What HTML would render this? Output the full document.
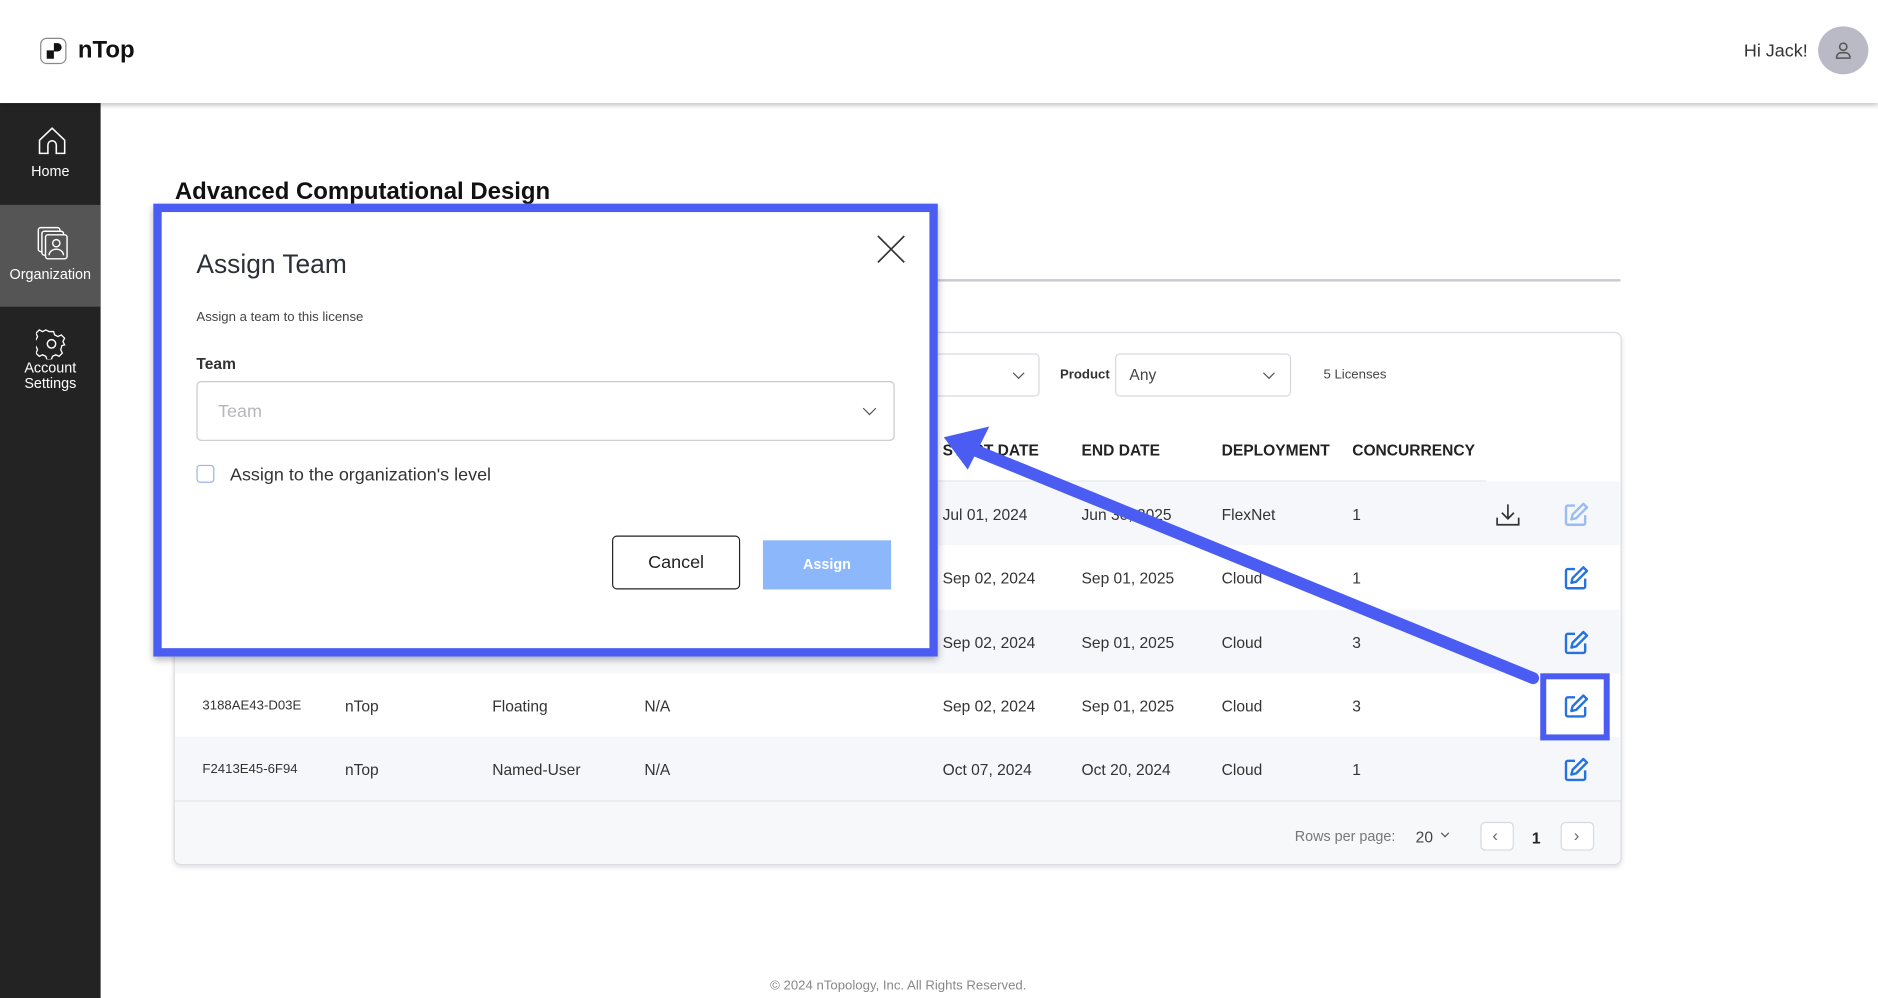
<!DOCTYPE html>
<html><head><meta charset="utf-8">
<style>
html,body{margin:0;padding:0;width:1878px;height:998px;overflow:hidden;background:#fff;font-family:"Liberation Sans",sans-serif;color:#222}
#w{position:absolute;left:0;top:0;width:1568px;height:833px;transform:scale(1.19770,1.19808);transform-origin:0 0}
.a{position:absolute}
.hdr{left:0;top:0;width:1568px;height:86px;background:#fff;box-shadow:0 2px 4px rgba(0,0,0,.25);z-index:2}
.side{left:0;top:86px;width:84px;height:747px;background:#232323}
.nav{position:absolute;left:0;width:84px;height:85px;color:#fff;font-size:12px;text-align:center;line-height:13px}
.row{position:absolute;left:146px;width:1206px;height:53px}
.row span{position:absolute;top:20px;font-size:13px;color:#333}
.card{left:145px;top:277px;width:1207px;height:443px;border:1px solid #dcdde2;border-radius:6px;box-shadow:0 2px 4px rgba(0,0,0,.12);background:#fff;overflow:hidden}
.sel{position:absolute;border:1px solid #d8d9de;border-radius:4px;background:#fff}
.chev{position:absolute;width:6px;height:6px;border-right:1px solid #555;border-bottom:1px solid #555;transform:rotate(45deg)}
</style></head><body>
<div id="w">
<div class="a hdr">
  <svg class="a" style="left:33px;top:31px" width="24" height="24" viewBox="0 0 24 24"><rect x="1" y="1" width="21" height="21" rx="5" fill="#fff" stroke="#888" stroke-width="1"/><path d="M12 5h3a3 3 0 0 1 0 7h-3v6H6v-7h6z" fill="#111"/></svg>
  <div class="a" style="left:65px;top:31px;font-size:20px;font-weight:bold;color:#111">nTop</div>
  <div class="a" style="left:1456px;top:34px;font-size:15px;color:#333">Hi Jack!</div>
  <div class="a" style="left:1518px;top:22px;width:42px;height:40px;border-radius:50%;background:#babac6"></div>
  <svg class="a" style="left:1530px;top:33px" width="18" height="18" viewBox="0 0 18 18" fill="none" stroke="#555" stroke-width="1.3"><circle cx="9" cy="6" r="3"/><path d="M3.5 15.5v-1.5a4 4 0 0 1 4-3h3a4 4 0 0 1 4 3v1.5z"/></svg>
</div>
<div class="a side">
  <div class="nav" style="top:0">
    <svg style="position:absolute;left:31px;top:19px" width="25" height="25" viewBox="0 0 25 25" fill="none" stroke="#fff" stroke-width="1.3"><path d="M2 12L12.5 2 23 12v11h-7v-7a3.5 3.5 0 0 0-7 0v7H2z"/></svg>
    <div style="position:absolute;top:51px;width:84px">Home</div>
  </div>
  <div class="nav" style="top:85px;background:#555">
    <svg style="position:absolute;left:31px;top:18px" width="26" height="28" viewBox="0 0 26 28" fill="none" stroke="#fff" stroke-width="1.2"><rect x="1" y="1" width="18" height="20" rx="2"/><rect x="4" y="4" width="18" height="20" rx="2" fill="#555"/><rect x="7" y="7" width="18" height="20" rx="2" fill="#555"/><circle cx="16" cy="14" r="3"/><path d="M10 24a6 5 0 0 1 12 0"/></svg>
    <div style="position:absolute;top:52px;width:84px">Organization</div>
  </div>
  <div class="nav" style="top:170px">
    <svg style="position:absolute;left:30px;top:18px" width="26" height="26" viewBox="0 0 26 26" fill="none" stroke="#fff" stroke-width="1.2"><path d="M11 2h4l1 3 3 1.5 3-1.5 3 3-1.5 3 1.5 3-3 1 .5 0-1 3.5 1.5 3-3 3-3-1.5-3 1.5-1 3h-4l-1-3-3-1.5-3 1.5-3-3 1.5-3-1.5-3-3-1v-4l3-1 1.5-3-1.5-3 3-3 3 1.5 3-1.5z" transform="scale(.92) translate(1,1)"/><circle cx="13" cy="13" r="3.5"/></svg>
    <div style="position:absolute;top:45px;width:84px">Account<br>Settings</div>
  </div>
</div>

<div class="a" style="left:146px;top:149px;font-size:20px;font-weight:bold;color:#111">Advanced Computational Design</div>
<div class="a" style="left:146px;top:233px;width:1207px;height:2px;background:#c8c9d0"></div>

<div class="a card">
  <div class="sel" style="left:590px;top:17px;width:130px;height:34px"><div class="chev" style="left:110px;top:12px"></div></div>
  <div class="a" style="left:739px;top:29px;font-size:11px;font-weight:bold;color:#333">Product</div>
  <div class="sel" style="left:785px;top:17px;width:145px;height:34px"><div class="a" style="left:11px;top:9px;font-size:13px;color:#444">Any</div><div class="chev" style="left:124px;top:12px"></div></div>
  <div class="a" style="left:959px;top:29px;font-size:11px;color:#444">5 Licenses</div>
  <div class="a" style="left:0;top:123px;width:1095px;height:1px;background:#e3e4e8"></div>
  <div class="a" style="left:641px;top:90px;font-size:13px;font-weight:bold;color:#222">START DATE</div>
  <div class="a" style="left:757px;top:90px;font-size:13px;font-weight:bold;color:#222">END DATE</div>
  <div class="a" style="left:874px;top:90px;font-size:13px;font-weight:bold;color:#222">DEPLOYMENT</div>
  <div class="a" style="left:983px;top:90px;font-size:13px;font-weight:bold;color:#222">CONCURRENCY</div>
  <div class="a" style="left:0;top:390px;width:1207px;height:53px;background:#f7f8fa;border-top:1px solid #e3e4e8"></div>
  <div class="a" style="left:935px;top:413px;font-size:12px;color:#777">Rows per page:</div>
  <div class="a" style="left:1036px;top:413px;font-size:13px;color:#444">20</div>
  <div class="chev" style="left:1058px;top:415px;width:4px;height:4px"></div>
  <div class="sel" style="left:1090px;top:408px;width:26px;height:22px"><div class="a" style="left:9px;top:2px;font-size:14px;color:#666">‹</div></div>
  <div class="a" style="left:1133px;top:414px;font-size:13px;font-weight:bold;color:#222">1</div>
  <div class="sel" style="left:1157px;top:408px;width:26px;height:22px"><div class="a" style="left:10px;top:2px;font-size:14px;color:#666">›</div></div>
</div>

<div class="row" style="top:402px;background:#f6f7fa"><span style="left:641px">Jul 01, 2024</span><span style="left:757px">Jun 30, 2025</span><span style="left:874px">FlexNet</span><span style="left:983px">1</span></div>
<div class="row" style="top:455px"><span style="left:641px">Sep 02, 2024</span><span style="left:757px">Sep 01, 2025</span><span style="left:874px">Cloud</span><span style="left:983px">1</span></div>
<div class="row" style="top:509px;background:#f6f7fa"><span style="left:641px">Sep 02, 2024</span><span style="left:757px">Sep 01, 2025</span><span style="left:874px">Cloud</span><span style="left:983px">3</span></div>
<div class="row" style="top:562px"><span style="left:23px;top:21px;font-size:11px">3188AE43-D03E</span><span style="left:142px">nTop</span><span style="left:265px">Floating</span><span style="left:392px">N/A</span><span style="left:641px">Sep 02, 2024</span><span style="left:757px">Sep 01, 2025</span><span style="left:874px">Cloud</span><span style="left:983px">3</span></div>
<div class="row" style="top:615px;background:#f6f7fa"><span style="left:23px;top:21px;font-size:11px">F2413E45-6F94</span><span style="left:142px">nTop</span><span style="left:265px">Named-User</span><span style="left:392px">N/A</span><span style="left:641px">Oct 07, 2024</span><span style="left:757px">Oct 20, 2024</span><span style="left:874px">Cloud</span><span style="left:983px">1</span></div>

<svg class="a" style="left:1248px;top:419px" width="22" height="22" viewBox="0 0 22 22" fill="none" stroke="#333" stroke-width="1.4"><path d="M11 2v12M6 9l5 5 5-5M2 13v6h18v-6"/></svg>
<svg class="a" width="0" height="0"><defs><symbol id="ed" viewBox="0 0 22 22"><path d="M10 4H4a1.5 1.5 0 0 0-1.5 1.5v13A1.5 1.5 0 0 0 4 20h13a1.5 1.5 0 0 0 1.5-1.5V12" fill="none" stroke-width="2"/><path d="M17 2.5l3 3L11 14.5l-4 1 1-4z" fill="none" stroke-width="2" stroke-linejoin="round"/></symbol></defs></svg>
<svg class="a" style="left:1305px;top:418px;stroke:#98bdf2" width="22" height="22"><use href="#ed"/></svg>
<svg class="a" style="left:1305px;top:471px;stroke:#2573e0" width="22" height="22"><use href="#ed"/></svg>
<svg class="a" style="left:1305px;top:525px;stroke:#2573e0" width="22" height="22"><use href="#ed"/></svg>
<svg class="a" style="left:1305px;top:578px;stroke:#2573e0" width="22" height="22"><use href="#ed"/></svg>
<svg class="a" style="left:1305px;top:631px;stroke:#2573e0" width="22" height="22"><use href="#ed"/></svg>

<div class="a" style="left:0;top:817px;width:1500px;text-align:center;font-size:11px;color:#888">© 2024 nTopology, Inc. All Rights Reserved.</div>

<svg class="a" style="left:0;top:0" width="1568" height="833">
  <line x1="1280" y1="566" x2="812" y2="375" stroke="#4a5cf2" stroke-width="10" stroke-linecap="round"/>
  <polygon points="788,365 826,356 808,392" fill="#4a5cf2"/>
  <rect x="1288.5" y="564.5" width="53" height="51" fill="none" stroke="#4a5cf2" stroke-width="5"/>
</svg>

<div class="a" style="left:128px;top:170px;width:641px;height:364px;border:7px solid #4a5cf2;background:#fff;box-shadow:0 3px 6px rgba(0,0,0,.3)">
  <div class="a" style="left:29px;top:31px;font-size:22px;color:#2b2f38">Assign Team</div>
  <svg class="a" style="left:597px;top:19px" width="24" height="24" viewBox="0 0 24 24" stroke="#333" stroke-width="1.4"><path d="M1 1l22 22M23 1L1 23"/></svg>
  <div class="a" style="left:29px;top:82px;font-size:11px;color:#444">Assign a team to this license</div>
  <div class="a" style="left:29px;top:119px;font-size:13px;font-weight:bold;color:#333">Team</div>
  <div class="sel" style="left:29px;top:141px;width:581px;height:48px;border-color:#c8c9ce"><div class="a" style="left:17px;top:16px;font-size:15px;color:#b5b7bd">Team</div><div class="chev" style="left:557px;top:18px;width:7px;height:7px"></div></div>
  <div class="a" style="left:29px;top:211px;width:13px;height:13px;border:1px solid #9ab4e6;border-radius:3px"></div>
  <div class="a" style="left:57px;top:211px;font-size:15px;color:#333">Assign to the organization's level</div>
  <div class="a" style="left:376px;top:270px;width:105px;height:43px;border:1px solid #222;border-radius:4px;text-align:center;line-height:43px;font-size:15px;color:#222">Cancel</div>
  <div class="a" style="left:502px;top:274px;width:107px;height:41px;background:#8cb7fb;text-align:center;line-height:41px;font-size:12px;font-weight:bold;color:#fff">Assign</div>
</div>
</div>
</body></html>
